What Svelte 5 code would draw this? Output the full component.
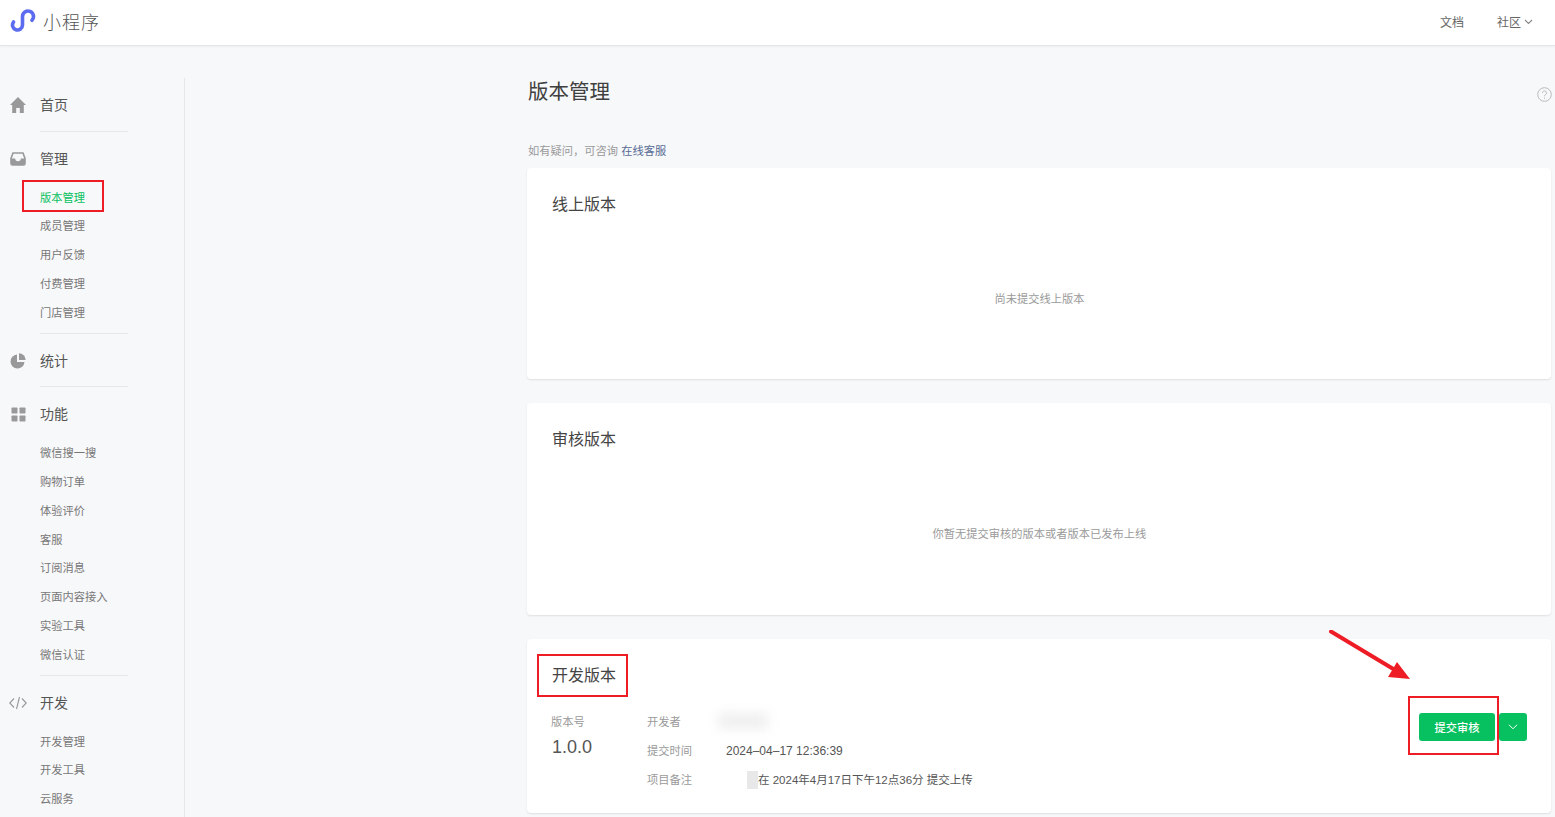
<script lang="ts">
  const nav = [
    { id: "home", label: "首页", sub: [], rule: true },
    { id: "manage", label: "管理", sub: ["版本管理", "成员管理", "用户反馈", "付费管理", "门店管理"], rule: true },
    { id: "stats", label: "统计", sub: [], rule: true },
    { id: "feature", label: "功能", sub: ["微信搜一搜", "购物订单", "体验评价", "客服", "订阅消息", "页面内容接入", "实验工具", "微信认证"], rule: true },
    { id: "dev", label: "开发", sub: ["开发管理", "开发工具", "云服务"], rule: false },
  ];
</script>

<div class="page">
  <header class="topbar">
    <div class="brand">
      <svg class="logo" width="26" height="24" viewBox="0 0 26 24" fill="none" stroke="#5b6cf0" stroke-width="3.6" stroke-linecap="round">
        <path d="M3.500 13A5 5 0 1 0 12.500 16V7.500A5.500 5.500 0 1 1 22 11.300" />
      </svg>
      <span class="brand-name">小程序</span>
    </div>
    <nav class="toplinks">
      <span>文档</span>
      <span class="drop">社区
        <svg width="9" height="6" viewBox="0 0 9 6" fill="none" stroke="#888" stroke-width="1.100"><path d="M1 1l3.500 3.500L8 1" /></svg>
      </span>
    </nav>
  </header>

  <div class="body">
    <aside class="side">
      <ul class="menu">
        {#each nav as g}
          <li class="group" class:ruled={g.rule} class:has-sub={g.sub.length > 0}>
            <div class="head">
              <span class="ico">
                {#if g.id === "home"}
                  <svg width="16" height="16" viewBox="0 0 16 16" fill="#999"><path d="M8 0L0 8h2.200v8h4v-5h3.600v5h4V8H16z" /></svg>
                {:else if g.id === "manage"}
                  <svg width="16" height="14" viewBox="0 0 16 14"><path d="M3 1h10l2 5.500V11.500A1.500 1.500 0 0 1 13.500 13h-11A1.500 1.500 0 0 1 1 11.500V6.500z" fill="#f7f8fa" stroke="#999" stroke-width="1.600" /><path d="M1 6.500h4.200a2.800 2.800 0 0 0 5.600 0H15v5A1.500 1.500 0 0 1 13.500 13h-11A1.500 1.500 0 0 1 1 11.500z" fill="#999" /></svg>
                {:else if g.id === "stats"}
                  <svg width="16" height="16" viewBox="0 0 16 16" fill="#999"><path d="M7 1.500A7 7 0 1 0 14.500 9H7z" /><path d="M9 .3A7 7 0 0 1 15.700 7H9z" /></svg>
                {:else if g.id === "feature"}
                  <svg width="15" height="15" viewBox="0 0 15 15" fill="#999"><rect x=".5" y=".5" width="6" height="6" rx=".8" /><rect x="8.500" y=".5" width="6" height="6" rx=".8" /><rect x=".5" y="8.500" width="6" height="6" rx=".8" /><rect x="8.500" y="8.500" width="6" height="6" rx=".8" /></svg>
                {:else}
                  <svg width="18" height="14" viewBox="0 0 18 14" fill="none" stroke="#999" stroke-width="1.100"><path d="M5 2.500L.8 7 5 11.500M13 2.500L17.200 7 13 11.500M10.500 1l-3 12" /></svg>
                {/if}
              </span>
              <span class="label">{g.label}</span>
            </div>
            {#if g.sub.length}
              <ul class="subs">
                {#each g.sub as s}
                  <li class:on={s === "版本管理"}>
                    {s}
                    {#if s === "版本管理"}<i class="mark side-mark"></i>{/if}
                  </li>
                {/each}
              </ul>
            {/if}
          </li>
        {/each}
      </ul>
    </aside>

    <main class="main">
      <svg class="help" width="15" height="15" viewBox="0 0 15 15" fill="none" stroke="#bbb"><circle cx="7.500" cy="7.500" r="6.800" /><path d="M5.500 5.800a2 2 0 1 1 3 1.800c-.7.400-1 .8-1 1.600" /><path d="M7.500 10.500v1.200" /></svg>
      <h1>版本管理</h1>
      <p class="hint">如有疑问，可咨询 <a href="#help">在线客服</a></p>

      <section class="card">
        <h2>线上版本</h2>
        <p class="empty">尚未提交线上版本</p>
      </section>

      <section class="card">
        <h2>审核版本</h2>
        <p class="empty">你暂无提交审核的版本或者版本已发布上线</p>
      </section>

      <section class="card dev">
        <h2><span class="title-wrap">开发版本<i class="mark title-mark"></i></span></h2>
        <div class="dev-row">
          <div class="ver">
            <span class="key">版本号</span>
            <span class="num">1.0.0</span>
          </div>
          <dl class="meta">
            <dt>开发者</dt>
            <dd><span class="blur"></span></dd>
            <dt>提交时间</dt>
            <dd class="date">2024–04–17 12:36:39</dd>
            <dt>项目备注</dt>
            <dd class="note"><span class="redact"></span>在 2024年4月17日下午12点36分 提交上传</dd>
          </dl>
          <div class="actions">
            <button class="btn">提交审核<i class="mark btn-mark"></i></button>
            <button class="btn more" aria-label="更多">
              <svg width="10" height="6" viewBox="0 0 10 6" fill="none" stroke="#fff" stroke-width="1"><path d="M1 .8L5 4.800 9 .8" /></svg>
            </button>
          </div>
        </div>
        <svg class="arrow" width="84" height="52" viewBox="0 0 84 52">
          <path d="M2 1.500L66 40" stroke="#ee1c25" stroke-width="4" stroke-linecap="round" />
          <path d="M81 49L59 47 68 32z" fill="#ee1c25" />
        </svg>
      </section>
    </main>
  </div>
</div>

<style>
  :global(body) {
    margin: 0;
    background: #f7f8fa;
    font-family: "Liberation Sans", "Noto Sans CJK SC", sans-serif;
    color: #353535;
  }

  .page {
    height: 100vh;
    overflow: hidden;
    display: flex;
    flex-direction: column;
  }

  .topbar {
    flex: none;
    height: 45px;
    padding: 0 22px 0 10px;
    display: flex;
    align-items: center;
    justify-content: space-between;
    background: #fff;
    border-bottom: 1px solid #e4e5e7;
    box-shadow: 0 1px 2px rgba(0, 0, 0, 0.04);
  }

  .brand {
    display: flex;
    align-items: center;
    gap: 7px;
    margin-top: -3px;
  }

  .brand-name {
    font-size: 18px;
    letter-spacing: 1px;
    color: #555;
    font-weight: 300;
  }

  .toplinks {
    display: flex;
    gap: 33px;
    margin-top: -2px;
    font-size: 12px;
    color: #666;
  }

  .drop {
    display: flex;
    align-items: center;
    gap: 3px;
  }

  .body {
    flex: 1;
    display: flex;
    min-height: 0;
  }

  .side {
    flex: none;
    width: 185px;
    height: 100%;
    margin-top: 32px;
    border-right: 1px solid #e6e7ea;
    box-sizing: border-box;
  }

  .menu,
  .subs {
    list-style: none;
    margin: 0;
    padding: 0;
  }

  .group {
    padding-top: 13px;
  }

  .group.ruled::after {
    content: "";
    display: block;
    width: 88px;
    margin: 11.500px 0 0 40px;
    border-top: 1px solid #e6e7ea;
  }

  .group.has-sub::after {
    margin-top: 0;
  }

  .head {
    display: flex;
    align-items: center;
    height: 28px;
  }

  .ico {
    flex: none;
    width: 36px;
    margin-right: 4px;
    display: flex;
    justify-content: center;
  }

  .label {
    margin-bottom: 2px;
    font-size: 14px;
    color: #555;
  }

  .subs {
    margin: 11.100px 0 5px;
  }

  .subs li {
    position: relative;
    height: 28.800px;
    line-height: 28.800px;
    padding-left: 40px;
    font-size: 11.250px;
    color: #777;
    white-space: nowrap;
  }

  .subs li.on {
    color: #07c160;
  }

  .main {
    position: relative;
    flex: 1;
    min-width: 0;
    padding: 32px 4px 0 342px;
  }

  h1 {
    margin: 0 0 0 1px;
    font-size: 20.500px;
    line-height: 28px;
    font-weight: 400;
    color: #404040;
  }

  .help {
    position: absolute;
    top: 41px;
    right: 3px;
  }

  .hint {
    margin: 36px 0 0;
    padding-left: 1px;
    font-size: 11.250px;
    line-height: 18px;
    color: #9a9a9a;
  }

  .hint a {
    color: #576b95;
    text-decoration: none;
  }

  .card {
    position: relative;
    height: 212px;
    margin-top: 24px;
    box-sizing: border-box;
    padding: 25px 24px 0 25px;
    background: #fff;
    border-radius: 4px;
    box-shadow: 0 1px 2px rgba(0, 0, 0, 0.1);
  }

  .hint + .card {
    height: 211px;
    margin-top: 8px;
  }

  h2 {
    margin: 0;
    font-size: 16px;
    line-height: 24px;
    font-weight: 400;
    color: #444;
  }

  .empty {
    margin: 73px 0 0;
    text-align: center;
    font-size: 11.250px;
    line-height: 18px;
    color: #9a9a9a;
  }

  .card.dev {
    height: 174px;
  }

  .title-wrap {
    position: relative;
    display: inline-block;
  }

  .dev-row {
    display: flex;
    align-items: flex-start;
    margin-top: 25px;
  }

  .ver {
    width: 95px;
    display: flex;
    flex-direction: column;
  }

  .key,
  dt {
    font-size: 11.250px;
    color: #9a9a9a;
  }

  .key {
    margin-left: -1px;
    line-height: 18px;
  }

  .num {
    margin-top: 4px;
    font-size: 18px;
    line-height: 24px;
    color: #555;
  }

  .meta {
    flex: 1;
    margin: 0;
    display: grid;
    grid-template-columns: 79px 1fr;
    grid-auto-rows: 29px;
    align-items: start;
    line-height: 18px;
  }

  dd {
    margin: 0;
    font-size: 11.500px;
    color: #555;
  }

  dd.date {
    font-size: 12px;
  }

  .blur {
    display: block;
    width: 50px;
    height: 16px;
    margin-left: -8px;
    background: #efefef;
    filter: blur(6px);
  }

  .note {
    display: flex;
  }

  .redact {
    width: 11px;
    height: 18px;
    margin-left: 21px;
    background: #e8e8e8;
  }

  .actions {
    display: flex;
    gap: 4px;
  }

  .btn {
    position: relative;
    height: 28px;
    width: 76px;
    padding: 0;
    border: 0;
    border-radius: 3px;
    background: #07c160;
    color: #fff;
    font: inherit;
    font-size: 11.250px;
    font-weight: 500;
    display: flex;
    align-items: center;
    justify-content: center;
  }

  .btn.more {
    width: 28px;
  }

  /* red annotation boxes on top of the screenshot */
  .mark {
    position: absolute;
    border: 2px solid #ee1c25;
    box-sizing: border-box;
    pointer-events: none;
  }

  .side-mark {
    left: 22px;
    top: -3.600px;
    width: 82px;
    height: 32px;
  }

  .title-mark {
    left: -15px;
    top: -10px;
    width: 91px;
    height: 43px;
  }

  .btn-mark {
    left: -11px;
    top: -17px;
    width: 91px;
    height: 59px;
  }

  .arrow {
    position: absolute;
    left: 802px;
    top: -9px;
  }
</style>
